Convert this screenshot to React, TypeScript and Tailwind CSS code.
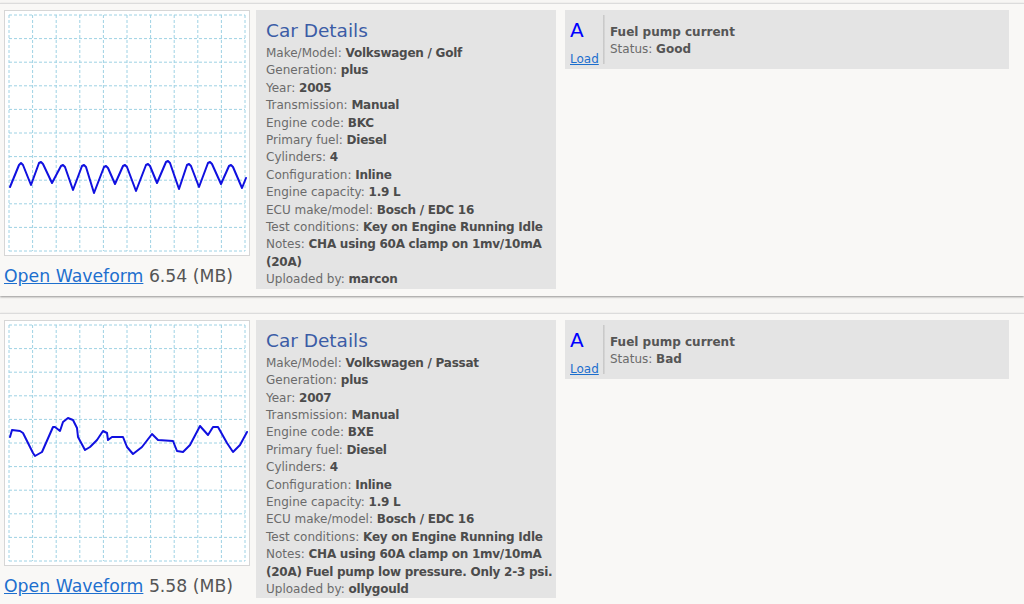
import React from "react";

type Detail = [string, string];

interface Waveform {
  size: string;
  points: [number, number][];
  details: Detail[];
  channel: string;
  title: string;
  status: string;
}

const waveforms: Waveform[] = [
  {
    size: "6.54",
    points: [
      [6, 177], [15, 155], [17, 153], [19, 155], [27, 175], [35, 153], [37, 152], [39, 154],
      [48, 173], [57, 156], [59, 155], [61, 157], [69, 180], [78, 156], [80, 155], [82, 157],
      [90, 183], [100, 157], [102, 156], [104, 158], [111, 174], [119, 156], [121, 155],
      [123, 157], [132, 181], [142, 155], [144, 154], [146, 156], [153, 173], [162, 152],
      [164, 151], [166, 153], [175, 179], [183, 155], [185, 154], [187, 156], [195, 177],
      [204, 153], [206, 152], [208, 154], [217, 174], [225, 156], [227, 155], [229, 157],
      [238, 178], [242, 168],
    ],
    details: [
      ["Make/Model", "Volkswagen / Golf"],
      ["Generation", "plus"],
      ["Year", "2005"],
      ["Transmission", "Manual"],
      ["Engine code", "BKC"],
      ["Primary fuel", "Diesel"],
      ["Cylinders", "4"],
      ["Configuration", "Inline"],
      ["Engine capacity", "1.9 L"],
      ["ECU make/model", "Bosch / EDC 16"],
      ["Test conditions", "Key on Engine Running Idle"],
      ["Notes", "CHA using 60A clamp on 1mv/10mA (20A)"],
      ["Uploaded by", "marcon"],
    ],
    channel: "A",
    title: "Fuel pump current",
    status: "Good",
  },
  {
    size: "5.58",
    points: [
      [6, 117], [8, 110], [16, 111], [19, 113], [29, 133], [31, 136], [38, 132], [49, 107],
      [51, 107], [56, 111], [59, 102], [64, 98], [69, 100], [73, 108], [74, 117], [81, 130],
      [86, 127], [93, 120], [99, 111], [103, 113], [104, 120], [108, 117], [119, 117],
      [123, 127], [129, 134], [138, 127], [148, 114], [154, 120], [169, 121], [173, 131],
      [179, 132], [186, 125], [196, 106], [204, 115], [209, 107], [214, 107], [223, 123],
      [229, 132], [236, 125], [243, 112],
    ],
    details: [
      ["Make/Model", "Volkswagen / Passat"],
      ["Generation", "plus"],
      ["Year", "2007"],
      ["Transmission", "Manual"],
      ["Engine code", "BXE"],
      ["Primary fuel", "Diesel"],
      ["Cylinders", "4"],
      ["Configuration", "Inline"],
      ["Engine capacity", "1.9 L"],
      ["ECU make/model", "Bosch / EDC 16"],
      ["Test conditions", "Key on Engine Running Idle"],
      ["Notes", "CHA using 60A clamp on 1mv/10mA (20A) Fuel pump low pressure. Only 2-3 psi."],
      ["Uploaded by", "ollygould"],
    ],
    channel: "A",
    title: "Fuel pump current",
    status: "Bad",
  },
];

// scope-style preview: dashed 10x10 grid with the trace on top
function Scope({ points }: { points: [number, number][] }) {
  const ticks = Array.from({ length: 11 }, (_, i) => 5 + i * 23.6);
  return (
    <svg width="246" height="246" viewBox="0 0 246 246" className="block shrink-0">
      <rect x="0.5" y="0.5" width="245" height="245" fill="#ffffff" stroke="#d6d6d6" />
      {ticks.map((t) => (
        <g key={t} stroke="#9ed2e4" strokeWidth="1" strokeDasharray="3 2">
          <line x1={t} y1="5" x2={t} y2="241" />
          <line x1="5" y1={t} x2="241" y2={t} />
        </g>
      ))}
      <polyline
        points={points.map((p) => p.join(",")).join(" ")}
        fill="none"
        stroke="#1010e0"
        strokeWidth="2"
        strokeLinejoin="round"
        strokeLinecap="round"
      />
    </svg>
  );
}

function WaveCard({ w }: { w: Waveform }) {
  return (
    <div className="flex items-start border-t border-[#dcdcdc] bg-[#f9f8f6] pl-[4px] pr-[4px] pt-[6px] pb-[7px] shadow-[0_1px_2px_rgba(0,0,0,0.4)]">
      <div className="w-[246px] shrink-0">
        <Scope points={w.points} />
        <div className="mt-[10px] text-[17.3px] leading-[20px] text-[#555555] whitespace-nowrap">
          <a href="#" className="text-[#1d6fce] underline">Open Waveform</a> {w.size} (MB)
        </div>
      </div>

      <div className="ml-[6px] w-[300px] shrink-0 bg-[#e4e4e4] pl-[10px] pt-[7px] text-[12px] leading-[17.4px] text-[#6b6b6b]">
        <h2 className="text-[18.5px] leading-[28px] text-[#3b5ca6]">Car Details</h2>
        {w.details.map(([label, value]) => (
          <div key={label}>
            {label}: <b className="font-bold tracking-[-0.25px] text-[#4c4c4c]">{value}</b>
          </div>
        ))}
      </div>

      <div className="ml-[9px] flex h-[59px] w-[444px] shrink-0 bg-[#e4e4e4] text-[12px]">
        <div className="w-[38px] pl-[5px] pt-[8px]">
          <div className="text-[20px] leading-[24px] text-[#0000ff]">{w.channel}</div>
          <a href="#" className="mt-[9px] block leading-[16px] text-[#1d6fce] underline">Load</a>
        </div>
        <div className="my-[5px] w-[2px] bg-gradient-to-r from-[#c4c4c4] to-[#dadada]" />
        <div className="pl-[5px] pt-[14px] leading-[17.3px] text-[#6b6b6b]">
          <div className="font-bold text-[#555555]">{w.title}</div>
          <div>
            Status: <b className="font-bold text-[#555555]">{w.status}</b>
          </div>
        </div>
      </div>
    </div>
  );
}

export default function App() {
  return (
    <main
      className="min-h-screen bg-[#f7f6f4] pt-[3px]"
      style={{ fontFamily: '"DejaVu Sans", Verdana, sans-serif' }}
    >
      <div className="flex flex-col gap-[17px]">
        {waveforms.map((w) => (
          <WaveCard key={w.size} w={w} />
        ))}
      </div>
    </main>
  );
}
